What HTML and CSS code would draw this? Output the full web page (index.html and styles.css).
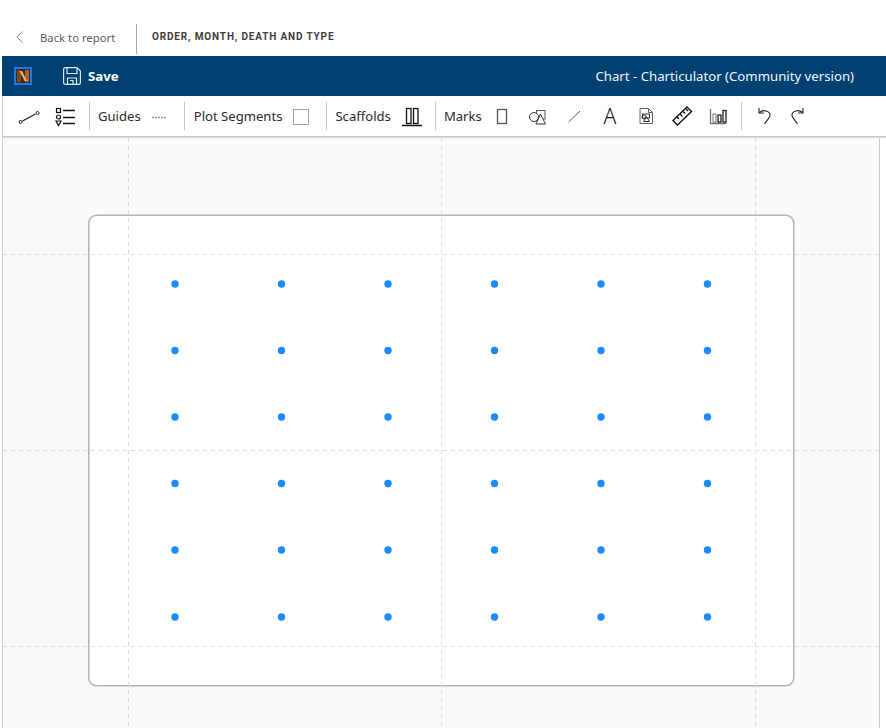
FILE: index.html
```html
<!DOCTYPE html>
<html lang="en">
<head>
    <meta charset="UTF-8">
    <title>Chart - Charticulator (Community version)</title>
    <link rel="stylesheet" href="styles.css">
</head>
<body>
    <div class="report-bar">
        <a class="back-link">
            <svg class="back-icon" width="8" height="12" viewBox="0 0 8 12"><path d="M6.5 0.5 L1 6 L6.5 11.5" fill="none" stroke="#8a8886" stroke-width="1"/></svg>
            <span>Back to report</span>
        </a>
        <div class="report-title">ORDER, MONTH, DEATH AND TYPE</div>
    </div>

    <div class="app">
        <div class="title-bar">
            <svg class="logo" width="18" height="18" viewBox="0 0 18 18">
                <rect x="1" y="1" width="16" height="16" fill="#3a2a24" stroke="#1e7be0" stroke-width="2"/>
                <path d="M3 3 h4 v12 h-4 z" fill="#7a4a2c"/>
                <path d="M11 3 h4 v12 h-4 z" fill="#a8652f"/>
                <path d="M5.5 4 L8 4 L13 14 L10.5 14 z" fill="#eeb26a"/>
            </svg>
            <button class="save-button">
                <svg width="18" height="18" viewBox="0 0 18 18" fill="none" stroke="#dfe6ec" stroke-width="1.2">
                    <path d="M2.5 0.6 H14 L17.4 4 V15.5 a1.9 1.9 0 0 1 -1.9 1.9 H2.5 a1.9 1.9 0 0 1 -1.9 -1.9 V2.5 a1.9 1.9 0 0 1 1.9 -1.9 z"/>
                    <path d="M4 1 V6.5 H14 V1"/>
                    <path d="M4.5 17 V11 H13.5 V17"/>
                    <path d="M7 13.5 H10 V17"/>
                </svg>
                <span>Save</span>
            </button>
            <div class="app-title">Chart - Charticulator (Community version)</div>
        </div>

        <div class="toolbar">
            <div class="tool">
                <svg width="24" height="24" viewBox="0 0 24 24" fill="none" stroke="#222"><circle cx="2.5" cy="18" r="1.5"/><circle cx="19.5" cy="9" r="1.5"/><path d="M4.5 17 L17.5 10" stroke-width="1.3"/></svg>
            </div>
            <div class="tool">
                <svg width="24" height="24" viewBox="0 0 24 24" fill="none" stroke="#111" stroke-width="1.2"><rect x="2.5" y="4.5" width="4" height="4"/><circle cx="4.5" cy="13" r="2"/><path d="M2 17 H7 L4.5 21.5 z"/><path d="M9 6.5 H21 M9 13.5 H21 M9 19.5 H21" stroke-width="1.4"/></svg>
            </div>
            <div class="sep"></div>
            <span class="tool-label">Guides</span>
            <div class="tool">
                <svg width="24" height="24" viewBox="0 0 24 24"><path d="M3 13.5 H18" stroke="#9a9a9a" stroke-width="1.4" stroke-dasharray="2 1"/></svg>
            </div>
            <div class="sep"></div>
            <span class="tool-label label-plot">Plot Segments</span>
            <div class="tool">
                <svg width="24" height="24" viewBox="0 0 24 24"><rect x="2.5" y="5.5" width="15" height="15" fill="none" stroke="#444" stroke-dasharray="1 1"/></svg>
            </div>
            <div class="sep"></div>
            <span class="tool-label label-scaffolds">Scaffolds</span>
            <div class="tool">
                <svg width="24" height="24" viewBox="0 0 24 24" fill="none" stroke="#111"><rect x="6.5" y="4.5" width="4.5" height="15" stroke-width="1.3"/><rect x="13.5" y="4.5" width="4.5" height="15" stroke-width="1.3"/><path d="M2 21.5 H22" stroke-width="1.5"/></svg>
            </div>
            <div class="sep"></div>
            <span class="tool-label">Marks</span>
            <div class="tool">
                <svg width="24" height="24" viewBox="0 0 24 24"><rect x="7.5" y="5.5" width="9" height="14" fill="none" stroke="#555" stroke-width="1.3"/></svg>
            </div>
            <div class="tool">
                <svg width="24" height="24" viewBox="0 0 24 24" fill="none" stroke="#333"><rect x="10.5" y="6.5" width="8.5" height="8.5" stroke="#555"/><circle cx="8" cy="13" r="4.5" fill="#fff"/><path d="M14.5 10 L19.5 20 H10 z" fill="#fff"/></svg>
            </div>
            <div class="tool">
                <svg width="24" height="24" viewBox="0 0 24 24"><path d="M6.5 18 L18 7" stroke="#666" stroke-width="1"/></svg>
            </div>
            <div class="tool">
                <span class="text-mark">A</span>
            </div>
            <div class="tool">
                <svg width="24" height="24" viewBox="0 0 24 24" fill="none" stroke="#333"><path d="M6 4.5 H14.5 L18.5 8.5 V19.5 H6 z" stroke="#6e5a5a"/><path d="M14.5 4.5 V8.5 H18.5" stroke="#6e5a5a"/><rect x="8.5" y="10" width="7" height="4"/><circle cx="10" cy="13" r="2"/><path d="M12.5 12.5 L15.5 17.5 H9.5 z"/></svg>
            </div>
            <div class="tool">
                <svg width="24" height="24" viewBox="0 0 24 24" fill="none" stroke="#111" stroke-width="1.4"><path d="M3 16.5 L17 3 L21.5 7.5 L7.5 21 z"/><path d="M7 13 L9 15 M10 10 L12.5 12.5 M13 7.5 L15 9.5 M16 5 L18 7"/></svg>
            </div>
            <div class="tool">
                <svg width="24" height="24" viewBox="0 0 24 24" fill="none"><path d="M4.5 5 V19.5 H20.5" stroke="#7a6a6a" stroke-width="1.3"/><rect x="7" y="10" width="3" height="8" stroke="#777"/><rect x="12" y="11" width="3" height="7" stroke="#222" stroke-width="1.3"/><rect x="17" y="6.5" width="3" height="11.5" stroke="#222" stroke-width="1.3"/></svg>
            </div>
            <div class="sep sep-tight"></div>
            <div class="tool tool-sm">
                <svg width="24" height="24" viewBox="0 0 24 24" fill="none" stroke="#222" stroke-width="1.1"><path d="M7 4 V9 H12"/><path d="M7.5 8.5 C 11 5 18 7 18 11 C 18 14 14 17 12.5 20"/></svg>
            </div>
            <div class="tool tool-sm">
                <svg width="24" height="24" viewBox="0 0 24 24" fill="none" stroke="#222" stroke-width="1.1"><path d="M17 4 V9 H12"/><path d="M16.5 8.5 C 13 5 6 7 6 11 C 6 14 10 17 11.5 20"/></svg>
            </div>
        </div>

        <div class="canvas">
            <svg class="chart" width="876" height="590" viewBox="3 138 876 590">
                <rect x="88.75" y="215.25" width="705" height="470.5" rx="8" fill="#fff" stroke="#b4b4b4" stroke-width="1.5"/>
                <g stroke="#dcdcdc" stroke-dasharray="4 4">
                    <path d="M128.5 138 V728 M441.5 138 V728 M755.5 138 V728"/>
                    <path d="M3 254.5 H879 M3 450.5 H879 M3 646.5 H879"/>
                </g>
                <g fill="#1a8cff">
                    <circle cx="175" cy="284" r="3.7"/><circle cx="281.5" cy="284" r="3.7"/><circle cx="388" cy="284" r="3.7"/><circle cx="494.5" cy="284" r="3.7"/><circle cx="601" cy="284" r="3.7"/><circle cx="707.5" cy="284" r="3.7"/>
                    <circle cx="175" cy="350.5" r="3.7"/><circle cx="281.5" cy="350.5" r="3.7"/><circle cx="388" cy="350.5" r="3.7"/><circle cx="494.5" cy="350.5" r="3.7"/><circle cx="601" cy="350.5" r="3.7"/><circle cx="707.5" cy="350.5" r="3.7"/>
                    <circle cx="175" cy="417" r="3.7"/><circle cx="281.5" cy="417" r="3.7"/><circle cx="388" cy="417" r="3.7"/><circle cx="494.5" cy="417" r="3.7"/><circle cx="601" cy="417" r="3.7"/><circle cx="707.5" cy="417" r="3.7"/>
                    <circle cx="175" cy="483.5" r="3.7"/><circle cx="281.5" cy="483.5" r="3.7"/><circle cx="388" cy="483.5" r="3.7"/><circle cx="494.5" cy="483.5" r="3.7"/><circle cx="601" cy="483.5" r="3.7"/><circle cx="707.5" cy="483.5" r="3.7"/>
                    <circle cx="175" cy="550" r="3.7"/><circle cx="281.5" cy="550" r="3.7"/><circle cx="388" cy="550" r="3.7"/><circle cx="494.5" cy="550" r="3.7"/><circle cx="601" cy="550" r="3.7"/><circle cx="707.5" cy="550" r="3.7"/>
                    <circle cx="175" cy="617" r="3.7"/><circle cx="281.5" cy="617" r="3.7"/><circle cx="388" cy="617" r="3.7"/><circle cx="494.5" cy="617" r="3.7"/><circle cx="601" cy="617" r="3.7"/><circle cx="707.5" cy="617" r="3.7"/>
                </g>
            </svg>
        </div>
    </div>
</body>
</html>
```

FILE: styles.css
```css
html, body {
    height: 100%;
}

body {
    margin: 0;
    overflow: hidden;
    background-color: #fff;
    font-family: "Noto Sans", "Open Sans", sans-serif;
    color: #252423;
}

.report-bar {
    height: 56px;
    display: flex;
    align-items: flex-end;
    box-sizing: border-box;
    padding: 24px 0 2px 16px;
}

.back-link {
    width: 120px;
    height: 30px;
    box-sizing: border-box;
    padding-bottom: 4px;
    display: flex;
    align-items: center;
    font-size: 11.3px;
    color: #605e5c;
}

.back-icon {
    margin-right: 16px;
}

.report-title {
    height: 30px;
    box-sizing: border-box;
    padding: 0 0 6px 15px;
    display: flex;
    align-items: center;
    border-left: 1px solid #a0a8ae;
    font-family: "Roboto", sans-serif;
    font-size: 10px;
    font-weight: 700;
    letter-spacing: 0.85px;
    color: #403d3b;
}

.app {
    margin-left: 2px;
}

.title-bar {
    height: 40px;
    display: flex;
    align-items: center;
    background-color: #004172;
    color: #fff;
    padding-left: 12px;
}

.logo {
    flex: none;
}

.save-button {
    display: flex;
    align-items: center;
    gap: 7px;
    margin-left: 31px;
    padding: 0;
    border: none;
    background: none;
    color: #fff;
    font-family: inherit;
    font-size: 13.2px;
    font-weight: 700;
}

.app-title {
    margin-left: auto;
    padding-right: 32px;
    font-size: 13.2px;
    color: #f2f6f9;
}

.toolbar {
    height: 41px;
    display: flex;
    align-items: center;
    box-sizing: border-box;
    padding-left: 9px;
    background-color: #fff;
    border-left: 1px solid #ccc;
    border-bottom: 1px solid #c8c8c8;
    box-shadow: 0 1px 0 #d8d8d8;
}

.tool {
    flex: none;
    width: 36px;
    height: 32px;
    display: flex;
    align-items: center;
    justify-content: center;
}

.tool-sm {
    width: 34px;
}

.text-mark {
    font-size: 21px;
    font-weight: 300;
    color: #111;
}

.tool-label {
    flex: none;
    margin-right: 2px;
    font-size: 13.1px;
    color: #2b2b2b;
}

.label-plot {
    margin: 0 3px 0 1px;
}

.label-scaffolds {
    margin-right: 3px;
}

.sep {
    flex: none;
    width: 1px;
    height: 28px;
    margin: 0 8px 0 5px;
    background-color: #c8c8c8;
}

.sep-tight {
    margin: 0 5px 0 5px;
}

.canvas {
    width: 877px;
    height: 590px;
    margin-top: 1px;
    background-color: #fafafa;
    border-left: 1px solid #ccc;
    overflow: hidden;
}

.chart {
    display: block;
    border-right: 1px solid #c8c8c8;
}
```
